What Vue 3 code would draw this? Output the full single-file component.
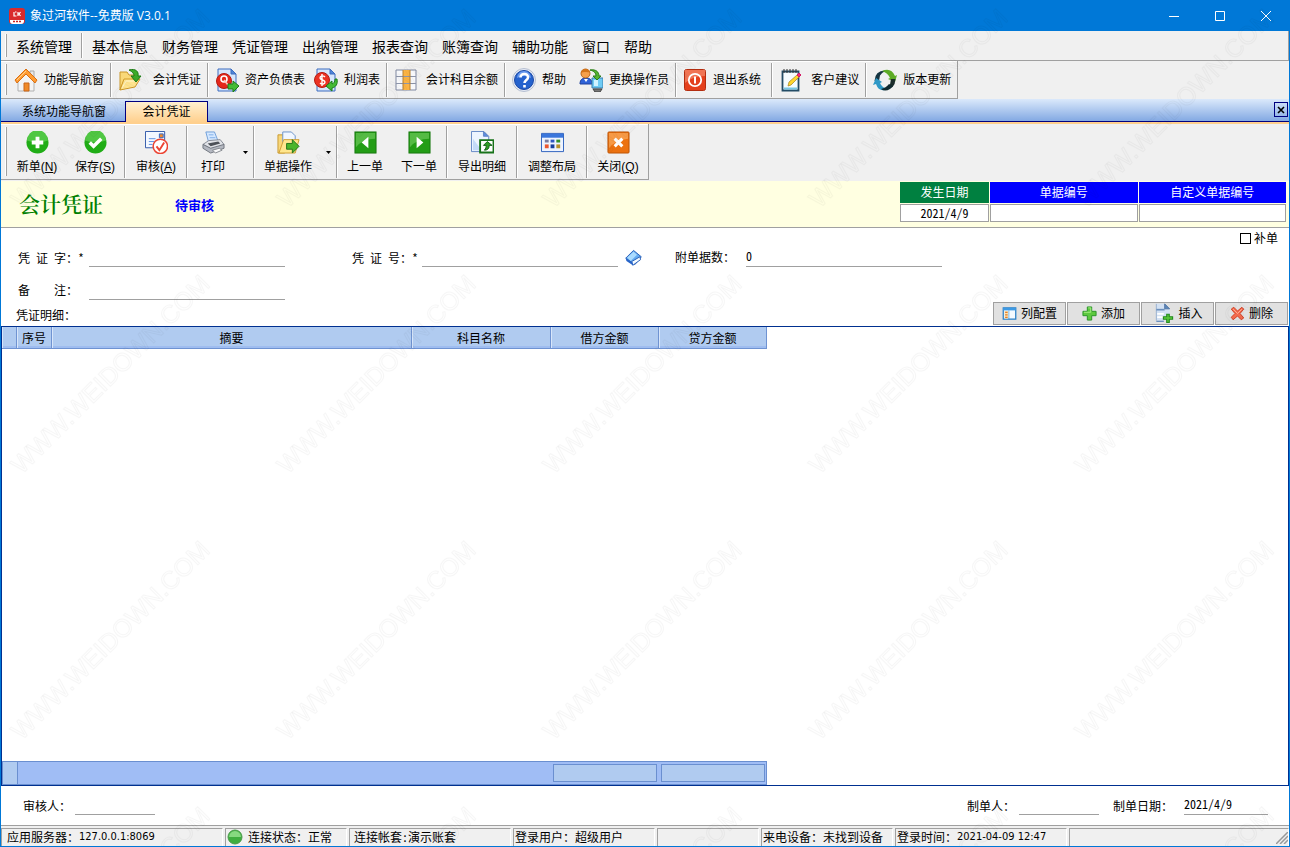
<script setup>
import { ref } from 'vue'

const menus = ['基本信息', '财务管理', '凭证管理', '出纳管理', '报表查询', '账簿查询', '辅助功能', '窗口', '帮助']

const page = '<path d="M3 1h13l5 5v17H3z" fill="#d6e6fb" stroke="#3c6cc0"/><path d="M16 1v5h5z" fill="#4f86d8" stroke="#3c6cc0"/>'
const icons = {
  home: '<path d="M16 3h4v7h-4z" fill="#e8e8e8" stroke="#a9a9a9"/><path d="M4 11 12 4l8 7v12H4z" fill="#f4f4f4" stroke="#b0b0b0"/><path d="M10 15h5v8h-5z" fill="#f08a28" stroke="#c8671a"/><path d="M1 12 12 1l11 11-2 3-9-9-9 9z" fill="#ff9c33" stroke="#d96f12"/><path d="M3 12 12 3" stroke="#ffd08a" fill="none"/>',
  folder: '<path d="M2 4h7l2 3h6v5H6L2 22z" fill="#f9d878" stroke="#c9962a"/><path d="M2 22 6 11h16l-5 8z" fill="#ffe48e" stroke="#d09a28"/><path d="M4 20 8 13h11" stroke="#fff5c9" fill="none"/><path d="M11 2c7-2 10 2 9 6h3l-5 6-5-6h3c0-2-1-4-5-6z" fill="#3cab28" stroke="#1b7a14"/>',
  balance: page + '<circle cx="9" cy="13" r="7.5" fill="#e5281b" stroke="#b51a10"/><circle cx="9" cy="11" r="3" fill="none" stroke="#fff" stroke-width="1.6"/><path d="m9 12 4 5" stroke="#ffc7bb" stroke-width="1.6"/><path d="M13 16h5v-3l6 5-6 6v-3h-5z" fill="#45ba35" stroke="#1c7c18"/>',
  profit: page + '<circle cx="8" cy="12" r="7.5" fill="#ea3324" stroke="#b51a10"/><path d="M11 9c-2-2-5-1-5 1s5 2 5 4-3 3-5 1M8 6v12" fill="none" stroke="#fff" stroke-width="1.4"/><path d="M23 11c1 5-1 8-5 9v3l-6-5 6-5v3c2-1 3-2 3-5z" fill="#45ba35" stroke="#1c7c18"/>',
  columns: '<path d="M2 2h20v20H2z" fill="#f7f8fb" stroke="#7e87a0"/><path d="M9 2h7v20H9z" fill="#fbb343"/><path d="M2 8.500h20M2 15.500h20" stroke="#8d95aa"/><path d="M9 2v20M16 2v20" stroke="#b88132"/>',
  help: '<circle cx="12" cy="12" r="11.500" fill="#e6ebf5" stroke="#b5bed0"/><circle cx="12" cy="12" r="9.500" fill="#2562cd" stroke="#1c49a4"/><path d="M5 10a7 7 0 0 1 14 0q-7-4-14 0z" fill="#6d9df0"/><path d="M8.500 9.500c0-5 8-4.500 7.500 0 0 2.500-3.500 2.500-3.500 5.500M12.500 17v2.500" stroke="#fff" stroke-width="2.600" fill="none"/>',
  user: '<path d="M1 16c0-5 3-6 6-6s6 1 6 6z" fill="#2f62d8" stroke="#1e409d"/><path d="m5 11 2 3 2-3z" fill="#fff"/><circle cx="6.500" cy="5.500" r="4.500" fill="#f6a04a" stroke="#b8651c"/><path d="M2 5c0-5 8-5 9-1-3 1-6-1-9 1z" fill="#d47418"/><path d="M13 10h11v10H13z" fill="#6fcbf4" stroke="#3a7fae"/><path d="M15 12h4v6h-4z" fill="#d0f2ff"/><path d="M14 21h9l-2 3h-5z" fill="#777" stroke="#444"/><path d="M11 2c6-1 9 2 9 6h2l-4 4-4-4h3c0-3-2-5-6-6z" fill="#54b52f" stroke="#2b7d18"/>',
  power: '<rect x="1.500" y="1.500" width="21" height="21" rx="2" fill="#e4401d" stroke="#b32d10"/><path d="M2 2h20v6Q10 8 2 15z" fill="#f58a6c" opacity=".7"/><circle cx="12" cy="12" r="6.200" fill="none" stroke="#fff" stroke-width="1.800"/><path d="M12 8.500v7" stroke="#fff" stroke-width="2"/>',
  note: '<path d="M3.500 3.500h16v19h-16z" fill="#f5fcff" stroke="#234c66" stroke-width="1.800"/><path d="M5 20.500h13" stroke="#79c8e4" stroke-width="2"/><path d="M5 1v4M8 1v4M11 1v4M14 1v4M17 1v4" stroke="#333"/><path d="m9 18 1-4 8-7 2 2-8 8z" fill="#ffd62e" stroke="#a5801c" stroke-width=".7"/><path d="m18 7 2-2 2 2-2 2z" fill="#ef2f7c" stroke="#d51a65"/>',
  update: '<path d="M1.500 13Q2 2 13 2.500q-4 2-6 5L6 13z" fill="#143441"/><path d="M9 3q9-4 13 5l2-1-2 7-7-3 2-1q-2-5-8-7z" fill="#5dab25"/><path d="M22.500 11Q22 22 11 21.500q4-2 6-5l1-5.500z" fill="#1b2c2b"/><path d="M15 21q-9 4-12-5l-3 1 3-7 6 4-2 1q2 5 8 6z" fill="#2f98c6"/><path d="M8 21q4 3 9 0l3-3-4-2q-3 4-8 5z" fill="#10292f"/>',
  add: '<circle cx="12" cy="12" r="11.500" fill="#20ad16"/><path d="M1 10a11 11 0 0 1 22 0Q12 14 1 10z" fill="#50c743"/><path d="M12 6v12M6 12h12" stroke="#fff" stroke-width="4"/>',
  check: '<circle cx="12" cy="12" r="11.500" fill="#20ad16"/><path d="M1 10a11 11 0 0 1 22 0Q12 14 1 10z" fill="#50c743"/><path d="m6 12 4 4 8-8" stroke="#fff" stroke-width="3.600" fill="none"/>',
  audit: '<path d="M.500.500h20v17H.500z" fill="#f3f8ff" stroke="#2f57a8"/><path d="M15 3h4v4h-4z" fill="#f08a2c" stroke="#3466c4"/><path d="M4 8h7M4 11h6M4 14h4" stroke="#5d8fe0"/><circle cx="16" cy="16" r="7.500" fill="#fff" stroke="#ec4433" stroke-width="1.600"/><path d="m12 16 3 4 5-8" fill="none" stroke="#ec4433" stroke-width="2"/>',
  print: '<path d="M4 1h9l4 10-10 1z" fill="#d5e8ff" stroke="#6f9ed8"/><path d="M7 4h5M8 7h6" stroke="#7faee8"/><path d="m1 14 6-4 12-1 4 5-9 7z" fill="#e1e3e8" stroke="#858a94"/><path d="M1 14v4l8 5 14-5v-4l-14 4z" fill="#b4b8c1" stroke="#70757e"/><path d="m6 13 11-2 2 2-10 3z" fill="#4d5158"/><path d="m11 20 7-2 3 2-7 3z" fill="#f9f9fa" stroke="#85898f"/>',
  docs: '<path d="M1 4h5l2 2v17H1z" fill="#f8d77a" stroke="#c99a30"/><path d="M6 1h9l4 4v9H6z" fill="#f0f6ff" stroke="#6b91c8"/><path d="M2 23 7 9h16l-4 14z" fill="#ffe68e" stroke="#cf9f33"/><path d="M10 13h6V9l7 7-7 7v-4h-6z" fill="#4bb52b" stroke="#24751a"/>',
  prev: '<rect x="1" y="1" width="22" height="22" fill="#239d16" stroke="#17780e"/><path d="M2 2h20v6Q9 8 2 17z" fill="#62c350" opacity=".8"/><path d="M15 6v12l-7-6z" fill="#fff"/>',
  next: '<rect x="1" y="1" width="22" height="22" fill="#239d16" stroke="#17780e"/><path d="M2 2h20v6Q9 8 2 17z" fill="#62c350" opacity=".8"/><path d="M9 6v12l7-6z" fill="#fff"/>',
  export: '<path d="M.500.500h13l5 5v16H.500z" fill="#edf4ff" stroke="#6287c5"/><path d="M13 .500v5h5z" fill="#5c8be0" stroke="#6287c5"/><path d="M2 20V8l9 12z" fill="#c3daf8"/><path d="M9.500 9.500h14v13h-14z" fill="#fff" stroke="#18731a" stroke-width="2"/><path d="m17 11 5 4h-3q0 5-5 5 2-2 2-5h-3z" fill="#2f9f25" stroke="#146017"/>',
  layout: '<path d="M.500 2.500h23v19H.500z" fill="#eef4ff" stroke="#2c60bd"/><path d="M1 3h22v4H1z" fill="#3a76dc"/><path d="M4 9h4v3H4z" fill="#7a7ca0"/><path d="M10 9h4v3h-4z" fill="#3058c2"/><path d="M16 9h4v3h-4z" fill="#30912d"/><path d="M4 14h4v4H4z" fill="#ec5830"/><path d="M10 14h4v4h-4z" fill="#173f9d"/><path d="M16 14h4v4h-4z" fill="#b7922e"/>',
  close: '<rect x="1" y="1" width="22" height="22" rx="1" fill="#ec7210" stroke="#bd5404"/><path d="M2 2h20v6Q9 9 2 18z" fill="#fba452" opacity=".8"/><path d="m8 8 8 8M16 8l-8 8" stroke="#fff" stroke-width="3.200"/>',
  config: '<path d="M2 3h20v18H2z" fill="#f4faff" stroke="#287fc7" stroke-width="2"/><path d="M2 3h20v4H2z" fill="#3d9ae4"/><path d="M4 8h6v12H4z" fill="#fbe3b0"/><path d="M5 10h4M5 14h4M5 18h4" stroke="#e17d2e" stroke-width="2"/><path d="M11 7v14" stroke="#3d9ae4"/>',
  plus: '<path d="M8.500 1.500h7v7h7v7h-7v7h-7v-7h-7v-7h7z" fill="#5cc93e" stroke="#2d962a" stroke-width="1.600"/><path d="M10 3h4v7H3" fill="none" stroke="#a5ec83" stroke-width="1.600"/>',
  insert: '<path d="M4 1h10l6 6v14H4z" fill="#d3e1f3"/><path d="M4 1v20" stroke="#8fa9cb"/><path d="M14 1v6h6z" fill="#5d87ba" stroke="#486f9f"/><path d="M4 8h10" stroke="#6b8fbd" stroke-width="2"/><path d="M5 13h8M5 17h8" stroke="#fff" stroke-width="2"/><path d="M4 22h9" stroke="#6b8fbd" stroke-width="1.600"/><path d="M16.500 13.500h3v3h4v3h-4v4h-3v-4h-4v-3h4z" fill="#5acb38" stroke="#278c21" stroke-width="1.400"/>',
  remove: '<path d="m2 5 4-3 6 6 7-6 3 3-6 7 6 7-4 3-6-6-7 6-3-4 6-6z" fill="#f36b4d" stroke="#cf3d23" stroke-width="1.500"/><path d="m5 5 7 7 7-7" fill="none" stroke="#ffb39c" stroke-width="1.400"/>',
  book: '<path d="M1 13 12 2l11 9-9 11z" fill="#63aaf0" stroke="#2c62ba" stroke-width="1.400"/><path d="m3 12 9-8 5 4-9 9z" fill="#aadbff"/><path d="m9 18 12-7 1 4-11 8z" fill="#f5fbff" stroke="#2c62ba" stroke-width="1.400"/><path d="m1 13 1 4 9 6v-4z" fill="#2764c9"/>'
}

const shortcuts = [
  [{ t: '功能导航窗', i: 'home' }],
  [{ t: '会计凭证', i: 'folder', c: 'gap-l' }],
  [{ t: '资产负债表', i: 'balance' }, { t: '利润表', i: 'profit' }],
  [{ t: '会计科目余额', i: 'columns', c: 'gap-m' }],
  [{ t: '帮助', i: 'help', c: 'trail' }, { t: '更换操作员', i: 'user' }],
  [{ t: '退出系统', i: 'power', c: 'trail' }],
  [{ t: '客户建议', i: 'note', c: 'gap-m' }],
  [{ t: '版本更新', i: 'update' }]
]

const actions = [
  [{ t: '新单', k: 'N', i: 'add', c: 'w-m' }, { t: '保存', k: 'S', i: 'check', c: 'w-m' }],
  [{ t: '审核', k: 'A', i: 'audit', c: 'w-l' }],
  [{ t: '打印', i: 'print', c: 'w-s', drop: true }],
  [{ t: '单据操作', i: 'docs', c: 'w-xl', drop: true }],
  [{ t: '上一单', i: 'prev', c: 'w-n' }, { t: '下一单', i: 'next', c: 'w-n' }],
  [{ t: '导出明细', i: 'export', c: 'w-xxl' }],
  [{ t: '调整布局', i: 'layout', c: 'w-xxl' }],
  [{ t: '关闭', k: 'Q', i: 'close', c: 'w-l' }]
]

const rowActions = [
  { t: '列配置', i: 'config' },
  { t: '添加', i: 'plus' },
  { t: '插入', i: 'insert' },
  { t: '删除', i: 'remove' }
]

const billDate = ref('2021/4/9')
const billNo = ref('')
const customNo = ref('')
const word = ref('')
const number = ref('')
const attach = ref('0')
const remark = ref('')
const extra = ref(false)
const auditor = ref('')
const maker = ref('')
const madeDate = ref('2021/4/9')
</script>

<template>
  <div class="window">
    <header class="titlebar">
      <svg class="logo" viewBox="0 0 16 16" aria-hidden="true">
        <rect width="16" height="16" rx="3" fill="#d92a2c" />
        <path d="M1 12h14v1a3 3 0 0 1-3 3H4a3 3 0 0 1-3-3z" fill="#fff" />
        <path d="M5 4v4h2.500M7.500 4H6M9 4v4M11.500 4 10 6l1.500 2" fill="none" stroke="#fff" stroke-width="1.200" />
        <path d="M4 13.500h8" stroke="#c22" stroke-width="1.500" stroke-dasharray="2 1" />
      </svg>
      <h1>象过河软件--免费版 V3.0.1</h1>
      <div class="winbtns">
        <button aria-label="最小化"><svg viewBox="0 0 10 10"><path d="M0 5.500h10" /></svg></button>
        <button aria-label="最大化"><svg viewBox="0 0 10 10"><path d="M.500.500h9v9h-9z" /></svg></button>
        <button aria-label="关闭"><svg viewBox="0 0 10 10"><path d="m0 0 10 10M10 0 0 10" /></svg></button>
      </div>
    </header>

    <nav class="menubar">
      <i class="grip"></i>
      <button>系统管理</button>
      <i class="sep"></i>
      <button v-for="m in menus" :key="m">{{ m }}</button>
    </nav>

    <div class="shortcuts">
      <i class="grip"></i>
      <div v-for="(g, n) in shortcuts" :key="n" class="group">
        <button v-for="b in g" :key="b.t" :class="b.c">
          <svg class="ico" viewBox="0 0 24 24" fill="none" v-html="icons[b.i]"></svg>
          <span>{{ b.t }}</span>
        </button>
      </div>
    </div>

    <div class="tabs">
      <button class="tab">系统功能导航窗</button>
      <button class="tab active">会计凭证</button>
      <button class="tabclose" aria-label="关闭页签">
        <svg viewBox="0 0 8 8"><path d="m1 1 6 6M7 1 1 7" stroke="#000" stroke-width="1.600" /></svg>
      </button>
    </div>

    <div class="actions">
      <i class="grip"></i>
      <div v-for="(g, n) in actions" :key="n" class="group">
        <template v-for="b in g" :key="b.t">
          <button :class="['act', b.c]">
            <svg class="ico" viewBox="0 0 24 24" fill="none" v-html="icons[b.i]"></svg>
            <span>{{ b.t }}<template v-if="b.k">(<u>{{ b.k }}</u>)</template></span>
          </button>
          <button v-if="b.drop" class="drop" :aria-label="b.t + '选项'">
            <svg viewBox="0 0 5 3"><path d="M0 0h5L2.500 3z" fill="#000" /></svg>
          </button>
        </template>
      </div>
    </div>

    <section class="banner">
      <h2>会计凭证</h2>
      <strong>待审核</strong>
      <div class="ids">
        <div class="id date">
          <label for="bill-date">发生日期</label>
          <input id="bill-date" v-model="billDate" />
        </div>
        <div class="id">
          <label for="bill-no">单据编号</label>
          <input id="bill-no" v-model="billNo" />
        </div>
        <div class="id">
          <label for="custom-no">自定义单据编号</label>
          <input id="custom-no" v-model="customNo" />
        </div>
      </div>
    </section>

    <section class="form">
      <div class="line extra">
        <label><input v-model="extra" type="checkbox" />补单</label>
      </div>
      <div class="line fields">
        <div class="field f1">
          <label for="word">凭 证 字：*</label>
          <input id="word" v-model="word" />
        </div>
        <div class="field f2">
          <label for="number">凭 证 号：*</label>
          <input id="number" v-model="number" />
          <button class="lookup" aria-label="选择凭证号">
            <svg viewBox="0 0 24 24" fill="none" v-html="icons.book"></svg>
          </button>
        </div>
        <div class="field f3">
          <label for="attach">附单据数：</label>
          <input id="attach" v-model="attach" />
        </div>
      </div>
      <div class="line fields second">
        <div class="field f1">
          <label for="remark">备&nbsp;&nbsp;&nbsp; 注：</label>
          <input id="remark" v-model="remark" />
        </div>
      </div>
      <div class="line detail">
        <span>凭证明细：</span>
        <div class="rowbtns">
          <button v-for="b in rowActions" :key="b.t">
            <svg :class="{ big: b.i === 'insert' }" viewBox="0 0 24 24" fill="none" v-html="icons[b.i]"></svg>
            {{ b.t }}
          </button>
        </div>
      </div>
    </section>

    <section class="grid">
      <table>
        <colgroup>
          <col class="c0" /><col class="c1" /><col class="c2" /><col class="c3" /><col class="c4" /><col class="c4" />
        </colgroup>
        <thead>
          <tr><th></th><th>序号</th><th>摘要</th><th>科目名称</th><th>借方金额</th><th>贷方金额</th></tr>
        </thead>
      </table>
      <div class="totals"><i></i><output aria-label="借方合计"></output><output aria-label="贷方合计"></output></div>
    </section>

    <footer class="sign">
      <div class="field s1">
        <label for="auditor">审核人：</label>
        <input id="auditor" v-model="auditor" />
      </div>
      <div class="field s2">
        <label for="maker">制单人：</label>
        <input id="maker" v-model="maker" />
      </div>
      <div class="field s3">
        <label for="made-date">制单日期：</label>
        <input id="made-date" v-model="madeDate" />
      </div>
    </footer>

    <div class="status">
      <span class="p1">应用服务器：<b>127.0.0.1:8069</b></span>
      <span class="p2">
        <svg viewBox="0 0 16 16" aria-hidden="true">
          <circle cx="8" cy="8" r="7" fill="#3fae3f" stroke="#4b9a4b" />
          <path d="M2 8a6 6 0 0 1 12 0z" fill="#86d980" />
        </svg>连接状态：正常
      </span>
      <span class="p3">连接帐套:演示账套</span>
      <span class="p4">登录用户：超级用户</span>
      <span class="p5"></span>
      <span class="p6">来电设备：未找到设备</span>
      <span class="p7">登录时间：<b>2021-04-09 12:47</b></span>
      <span class="p8">
        <svg class="size" viewBox="0 0 12 12" aria-hidden="true">
          <path d="M0 12 12 0M4 12l8-8M8 12l4-4" stroke="#999" stroke-width="1.500" />
        </svg>
      </span>
    </div>

    <svg class="mark" aria-hidden="true">
      <defs>
        <pattern id="mark" width="266" height="266" patternUnits="userSpaceOnUse">
          <text x="109" y="117" transform="rotate(-45 109 108)" text-anchor="middle">WWW.WEIDOWN.COM</text>
        </pattern>
      </defs>
      <rect width="100%" height="100%" fill="url(#mark)" />
    </svg>
  </div>
</template>

<style>
body {
  margin: 0;
}
</style>

<style scoped>
.window {
  --ui: "Liberation Sans", "Noto Sans CJK SC", sans-serif;
  --song: "Noto Sans Mono CJK SC", "Noto Sans CJK SC", sans-serif;
  position: relative;
  box-sizing: border-box;
  display: flex;
  flex-direction: column;
  min-height: 100vh;
  border: 1px solid #0078d7;
  border-top: 0;
  background: #f0f0f0;
  color: #000;
  font: 12px/16px var(--ui);
}
.window * {
  box-sizing: border-box;
}
button,
input {
  margin: 0;
  padding: 0;
  border: 0;
  border-radius: 0;
  background: none;
  color: inherit;
  font: inherit;
  white-space: nowrap;
}
input {
  outline: 0;
  min-width: 0;
}
svg {
  display: block;
  flex: none;
}

.titlebar {
  display: flex;
  align-items: center;
  height: 31px;
  padding-left: 8px;
  background: #0078d7;
  color: #fff;
}
.logo {
  width: 16px;
  height: 16px;
}
h1 {
  flex: 1;
  margin: 0 0 0 5px;
  font: 12px/16px "Open Sans", "Noto Sans CJK SC", sans-serif;
}
.winbtns {
  display: flex;
}
.winbtns button {
  display: grid;
  place-items: center;
  width: 46px;
  height: 30px;
}
.winbtns svg {
  width: 10px;
  height: 10px;
  fill: none;
  stroke: #fff;
}

.grip {
  flex: none;
  width: 2px;
  margin: 3px 3px 3px 4px;
  border-right: 1px solid #a0a0a0;
  border-left: 1px solid #fff;
}
.menubar {
  display: flex;
  height: 30px;
  border: 1px solid #a0a0a0;
  border-width: 0 1px 1px 0;
  font-size: 14px;
}
.menubar button {
  padding: 2px 7px 0;
}
.menubar .grip {
  margin-right: 2px;
}
.sep {
  width: 2px;
  margin: 2px;
  border-right: 1px solid #fff;
  border-left: 1px solid #a0a0a0;
}

.shortcuts,
.actions {
  display: flex;
  align-self: flex-start;
  border: 1px solid #a0a0a0;
  border-width: 0 1px 1px 0;
  box-shadow: inset 0 1px #fff;
}
.shortcuts {
  height: 38px;
}
.shortcuts .grip,
.actions .grip {
  margin-right: 1px;
}
.group {
  display: flex;
  margin: 2px 0 1px;
}
.group:not(:last-child) {
  border-right: 1px solid #a0a0a0;
  box-shadow: 1px 0 #fff;
  margin-right: 1px;
}
.shortcuts .group {
  padding-right: 3px;
}
.shortcuts button {
  display: flex;
  align-items: center;
  gap: 6px;
  padding: 0 3px 0 6px;
}
.shortcuts .gap-m {
  gap: 8px;
}
.shortcuts .gap-l {
  gap: 11px;
}
.shortcuts .trail {
  padding-right: 7px;
}
.ico {
  width: 24px;
  height: 24px;
}

.tabs {
  display: flex;
  align-items: flex-end;
  height: 25px;
  padding-top: 2px;
  border-bottom: 2px solid #ffd08e;
  background: linear-gradient(#dbe9fb, #83a9e3 22px, #000080 22px);
  background-clip: padding-box;
}
.tab {
  height: 21px;
  width: 124px;
  padding-left: 2px;
}
.tab.active {
  width: 83px;
  padding-left: 0;
  border: 1px solid #000080;
  border-bottom: 0;
  background: linear-gradient(#fff0d0, #ffd08e);
}
.tabclose {
  display: grid;
  place-items: center;
  width: 14px;
  height: 15px;
  margin: 0 1px 5px auto;
  border: 1px solid #000080;
}
.tabclose svg {
  width: 8px;
  height: 8px;
}

.actions {
  height: 56px;
  margin-bottom: 1px;
}
.act {
  display: flex;
  flex-direction: column;
  align-items: center;
  gap: 5px;
  padding-top: 5px;
}
.act .ico {
  width: 23px;
  height: 23px;
}
.w-s { width: 50px; }
.w-n { width: 54px; }
.w-m { width: 58px; }
.w-l { width: 60px; }
.w-xl { width: 66px; }
.w-xxl { width: 68px; }
.drop {
  display: grid;
  place-items: center;
  width: 15px;
}
.drop svg {
  width: 5px;
  height: 3px;
}

.banner {
  display: flex;
  align-items: flex-start;
  height: 47px;
  padding: 1px 3px 0 18px;
  border-bottom: 1px solid #a0a0a0;
  background: #ffffe1;
}
h2 {
  margin: 6px 72px 0 0;
  color: #008000;
  font: 600 21px/30px "Noto Serif CJK SC", "Noto Sans CJK SC", serif;
}
.banner strong {
  margin-top: 15px;
  color: #00f;
  font: bold 13px/16px var(--song);
}
.ids {
  display: flex;
  gap: 1px;
  width: 386px;
  margin-left: auto;
}
.id {
  display: flex;
  flex: 1;
  flex-direction: column;
  gap: 1px;
  font-family: var(--song);
  text-align: center;
}
.id.date {
  flex: 0 0 89px;
}
.id label {
  height: 21px;
  background: #00f;
  color: #fff;
  line-height: 20px;
}
.id.date label {
  background: #008040;
}
.id input {
  width: 100%;
  height: 18px;
  padding-bottom: 2px;
  border: 1px solid #a0a0a0;
  background: #fff;
  line-height: 14px;
  text-align: center;
}

.form {
  background: #fff;
  font-family: var(--song);
}
.line {
  display: flex;
}
.extra {
  justify-content: flex-end;
  height: 20px;
  padding-right: 11px;
}
.extra label {
  display: flex;
  align-items: center;
  gap: 3px;
}
.extra input {
  width: 11px;
  height: 11px;
  border: 1px solid #000;
  appearance: none;
}
.fields {
  height: 19px;
  padding-left: 17px;
}
.second {
  height: 20px;
  margin-top: 13px;
}
.field {
  display: flex;
  align-items: stretch;
}
.field label {
  flex: none;
  padding-top: 2px;
  white-space: pre;
}
.field input {
  width: 196px;
  padding-bottom: 2px;
  border-bottom: 1px solid #a0a0a0;
}
.f1 label {
  width: 71px;
}
.f2 {
  margin-left: 67px;
}
.f2 label {
  width: 70px;
}
.f3 {
  margin-left: 33px;
}
.f3 label {
  width: 71px;
  padding-top: 1px;
}
.lookup {
  margin-left: 7px;
}
.lookup svg {
  width: 17px;
  height: 17px;
}
.detail {
  justify-content: space-between;
  height: 26px;
  padding: 2px 1px 1px 15px;
}
.detail span {
  padding-top: 5px;
}
.rowbtns {
  display: flex;
  gap: 1px;
}
.rowbtns button {
  display: flex;
  align-items: center;
  justify-content: center;
  gap: 4px;
  width: 73px;
  padding-bottom: 1px;
  border: 1px solid #a0a0a0;
  background: #e1e1e1;
}
.rowbtns svg {
  width: 15px;
  height: 15px;
}
.rowbtns svg.big {
  width: 22px;
  height: 20px;
}

.grid {
  display: flex;
  flex: 1;
  flex-direction: column;
  align-items: flex-start;
  justify-content: space-between;
  border: 1px solid #003090;
  background: #fff;
  font-family: var(--song);
}
table {
  width: 765px;
  border-collapse: separate;
  border-spacing: 0;
  table-layout: fixed;
}
.c0 { width: 15px; }
.c1 { width: 35px; }
.c2 { width: 360px; }
.c3 { width: 139px; }
.c4 { width: 108px; }
th {
  height: 22px;
  padding: 0;
  border-right: 1px solid #6f93d2;
  border-bottom: 1px solid #6f93d2;
  background: #b0cbf0;
  box-shadow: inset 1px 0 #d8e6fa, inset 0 -2px #9fbdf0;
  font-weight: normal;
}
.totals {
  display: flex;
  gap: 4px;
  width: 765px;
  height: 24px;
  padding-right: 1px;
  border: 1px solid #6a8fd0;
  background: #a0bdf5;
}
.totals i {
  width: 15px;
  margin-right: auto;
  border-right: 1px solid #6a8fd0;
  background: #b0cbf0;
}
.totals output {
  width: 104px;
  margin: 2px 0;
  border: 1px solid #6a8fd0;
  background: #b0cbf0;
}

.sign {
  display: flex;
  height: 40px;
  padding: 10px 21px 10px 22px;
  border-bottom: 1px solid #a0a0a0;
  background: #fff;
  font-family: var(--song);
}
.sign input {
  width: 80px;
}
.s1 label,
.s2 label {
  width: 52px;
}
.s2 {
  margin-left: auto;
}
.s3 {
  margin-left: 14px;
}
.s3 label {
  width: 71px;
}
.s3 input {
  width: 84px;
}

.status {
  display: flex;
  gap: 2px;
  height: 20px;
  padding-top: 2px;
  font-family: var(--song);
}
.status span {
  display: flex;
  align-items: center;
  padding-bottom: 2px;
  border: 1px solid #a0a0a0;
  border-right-color: #fff;
  border-bottom: 0;
  white-space: nowrap;
}
.status b {
  font: 11px/16px "DejaVu Sans Condensed", "DejaVu Sans", sans-serif;
}
.p1 { width: 222px; padding-left: 5px; }
.p2 { width: 122px; padding-left: 1px; gap: 5px; }
.p2 svg { width: 16px; height: 16px; }
.p3 { width: 162px; padding-left: 4px; }
.p4 { width: 142px; padding-left: 1px; }
.p5 { width: 102px; }
.p6 { width: 132px; padding-left: 1px; }
.p7 { width: 172px; padding-left: 1px; }
.p8 { flex: 1; justify-content: flex-end; }
.size {
  align-self: flex-end;
  width: 12px;
  height: 12px;
}

.mark {
  position: absolute;
  inset: 0;
  width: 100%;
  height: 100%;
  pointer-events: none;
}
.mark text {
  fill: none;
  stroke: #000;
  stroke-opacity: 0.035;
  font: 25px "Liberation Sans", sans-serif;
}
</style>
